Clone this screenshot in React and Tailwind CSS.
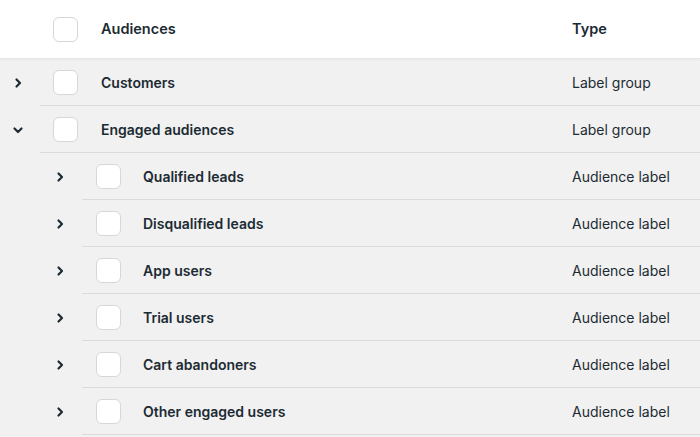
import React from "react";

const font = { fontFamily: "Inter, 'Noto Sans', sans-serif" };

function Chevron({ down }) {
  return (
    <svg width="12" height="12" viewBox="0 0 12 12" className="text-[#1c2b33]">
      {down ? (
        <path d="M2.5 4.5 L6 8 L9.5 4.5" fill="none" stroke="currentColor" strokeWidth="2.2" strokeLinecap="round" strokeLinejoin="round" />
      ) : (
        <path d="M4.5 2.5 L8 6 L4.5 9.5" fill="none" stroke="currentColor" strokeWidth="2.2" strokeLinecap="round" strokeLinejoin="round" />
      )}
    </svg>
  );
}

function Box() {
  return <div className="w-[25px] h-[25px] rounded-[6px] bg-white border border-[#d5d7da] shrink-0" />;
}

const rows = [
  { level: 0, name: "Customers", type: "Label group" },
  { level: 0, name: "Engaged audiences", type: "Label group", open: true },
  { level: 1, name: "Qualified leads", type: "Audience label" },
  { level: 1, name: "Disqualified leads", type: "Audience label" },
  { level: 1, name: "App users", type: "Audience label" },
  { level: 1, name: "Trial users", type: "Audience label" },
  { level: 1, name: "Cart abandoners", type: "Audience label" },
  { level: 1, name: "Other engaged users", type: "Audience label" },
];

export default function App() {
  return (
    <div className="w-[700px] h-[437px] overflow-hidden bg-[#f1f1f1] text-[#1c2b33]" style={font}>
      <div className="h-[59px] bg-white flex items-center border-b border-[#e6e6e6] shadow-[0_1px_2px_rgba(0,0,0,0.04)]">
        <div className="w-[53px]" />
        <Box />
        <div className="w-[23px]" />
        <div className="flex-1 text-[14.5px] font-semibold">Audiences</div>
        <div className="w-[128px] text-[14.5px] font-semibold">Type</div>
      </div>
      {rows.map((r, i) => (
        <div key={i} className="h-[47px] flex">
          <div className={r.level === 0 ? "w-[40px] flex items-center pl-[12px] pt-[1px]" : "w-[82px] flex items-center pl-[54px] pt-[1px]"}>
            <Chevron down={r.open} />
          </div>
          <div className="flex-1 flex items-center border-b border-[#dadbde] pt-[1px]">
            <div className={r.level === 0 ? "w-[13px]" : "w-[14px]"} />
            <Box />
            <div className={r.level === 0 ? "w-[23px]" : "w-[22px]"} />
            <div className="flex-1 text-[14px] font-semibold">{r.name}</div>
            <div className="w-[128px] text-[14px]">{r.type}</div>
          </div>
        </div>
      ))}
    </div>
  );
}
